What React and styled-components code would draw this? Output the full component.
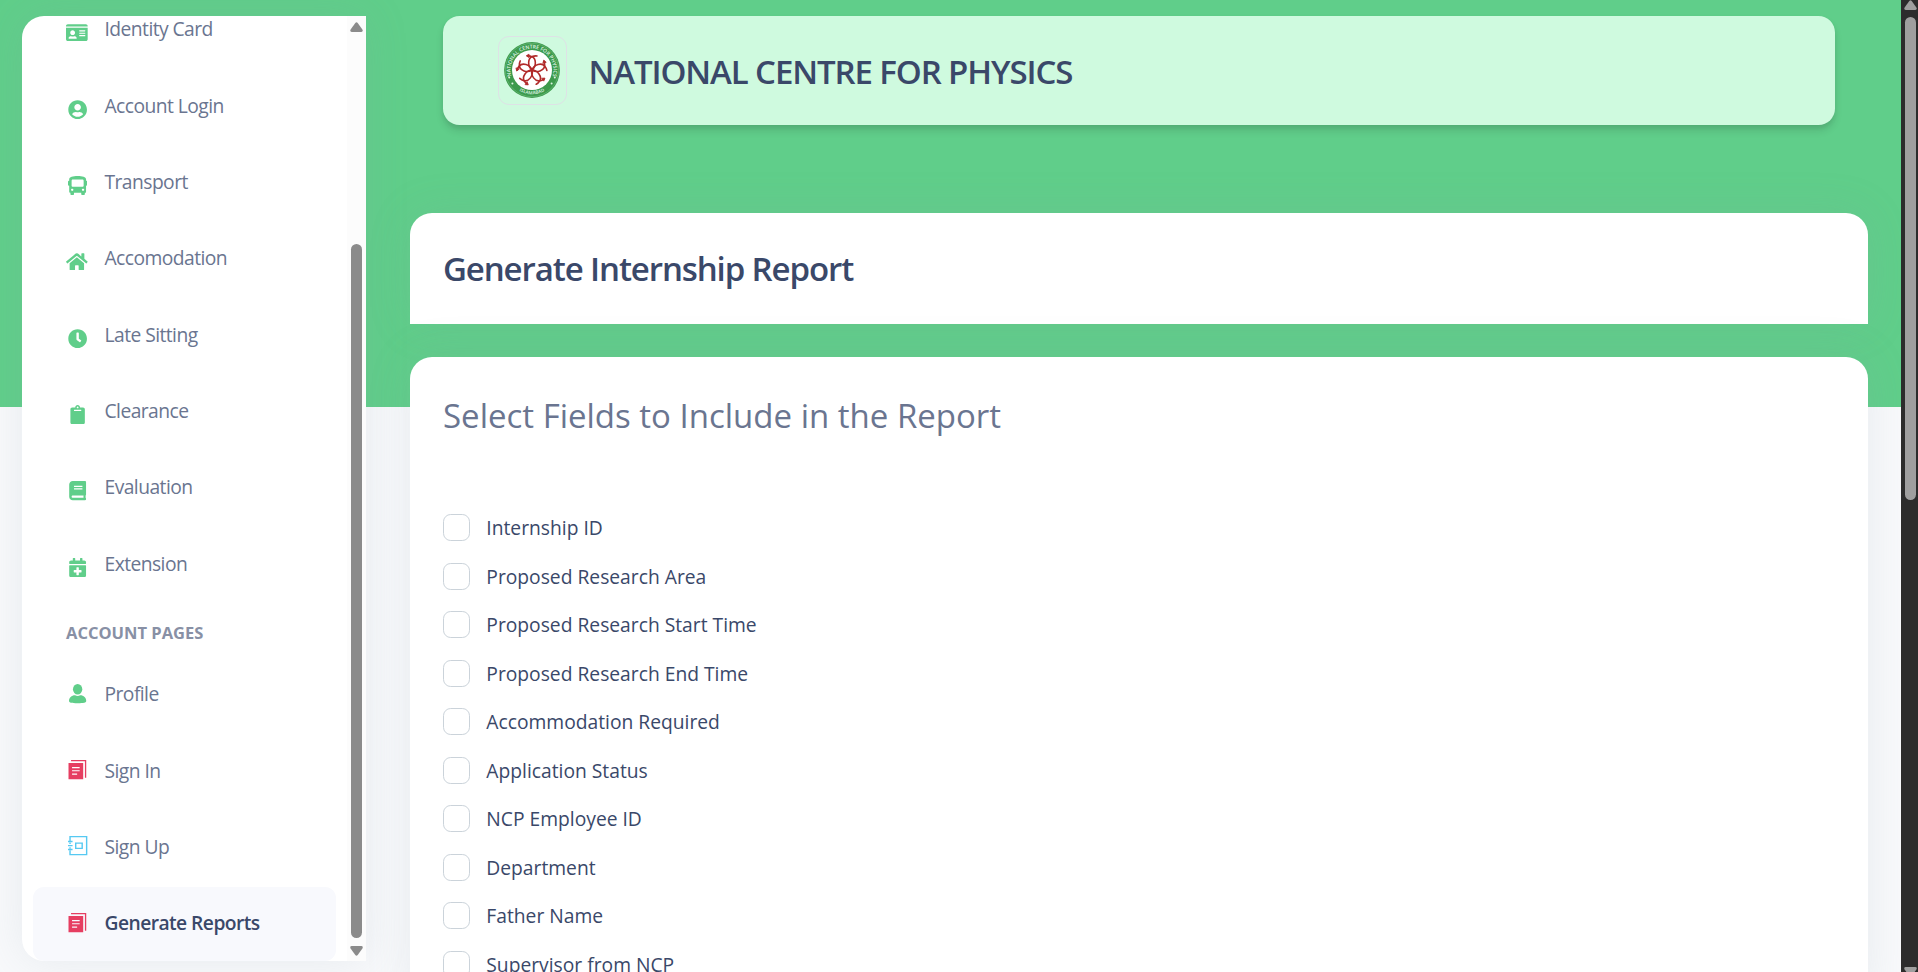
import React from "react";
import styled, { createGlobalStyle } from "styled-components";
import {
  FaIdCard,
  FaUserCircle,
  FaBus,
  FaHome,
  FaClock,
  FaClipboard,
  FaBook,
  FaCalendarPlus,
} from "react-icons/fa";

const GREEN = "#60ce8a";
const INK = "#3a4869";
const MUTED = "#6a7590";

const GlobalStyle = createGlobalStyle`
  *, *::before, *::after { box-sizing: border-box; }
  body {
    margin: 0;
    overflow: hidden;
    font-family: "Open Sans", "Noto Sans", sans-serif;
    color: ${INK};
  }
`;

const Page = styled.div`
  display: flex;
  height: 972px;
  overflow: hidden;
  background: linear-gradient(${GREEN} 407px, #f8f9fb 407px);
`;

const Sidebar = styled.aside`
  display: flex;
  flex: none;
  width: 344px;
  height: 945px;
  margin: 16px 0 0 22px;
  overflow: hidden;
  background: #fff;
  border-radius: 22px 0 0 22px;
  box-shadow: 0 0 44px rgba(136, 152, 170, 0.15);
`;

const NavList = styled.nav`
  display: flex;
  flex: 1;
  flex-direction: column;
  justify-content: flex-end;
  gap: 2.75px;
  min-height: 0;
  padding: 0 11px;
`;

const NavItem = styled.a`
  display: flex;
  flex: none;
  align-items: center;
  height: 73.6px;
  padding: 0 22px;
  border-radius: 11px;
  background: ${(p) => (p.$active ? "#f8f9fd" : "transparent")};
  color: ${(p) => (p.$active ? INK : MUTED)};
  font-size: 19.25px;
  font-weight: ${(p) => (p.$active ? 600 : 400)};
  letter-spacing: -0.55px;
  line-height: 29px;
`;

const NavIcon = styled.span`
  display: flex;
  align-items: center;
  justify-content: center;
  width: 44.5px;
  height: 30px;
  margin-right: 5px;
  padding-top: ${(p) => (p.$low ? "5.5px" : "0")};
  padding-bottom: ${(p) => (p.$low ? "0" : "4px")};
  color: ${(p) => p.$color};
  font-size: 19.25px;

  svg {
    flex: none;
    width: ${(p) => (p.$wide ? "21.7px" : "19.25px")};
    height: 19.25px;
  }
`;

const NavText = styled.span`
  padding-bottom: 3px;
`;

const NavHeading = styled.h6`
  flex: none;
  height: 51.5px;
  margin: 0;
  padding: 16.5px 0 0 33px;
  color: #8890a5;
  font-size: 16.5px;
  font-weight: 700;
  line-height: 24px;
  white-space: nowrap;
`;

const ScrollTrack = styled.div`
  display: flex;
  flex: none;
  flex-direction: column;
  align-items: center;
  width: ${(p) => p.$width};
  padding: ${(p) => p.$pad};
  background: ${(p) => p.$track};
  color: ${(p) => p.$thumb};

  svg { display: block; flex: none; }
`;

const ScrollThumb = styled.div`
  flex: none;
  width: 11px;
  height: ${(p) => p.$height};
  margin: ${(p) => p.$margin};
  border-radius: 5.5px;
  background: currentColor;
`;

const Main = styled.main`
  flex: 1;
  min-width: 0;
  padding: 16px 33px 0 44px;
`;

const Banner = styled.header`
  display: flex;
  align-items: center;
  height: 109px;
  margin: 0 33px;
  padding-left: 55px;
  border-radius: 16.5px;
  background: #cffadf;
  box-shadow: 0 5.5px 8px -1px rgba(20, 20, 20, 0.14),
    0 3px 5.5px -1px rgba(20, 20, 20, 0.08);
`;

const LogoFrame = styled.div`
  display: flex;
  align-items: center;
  justify-content: center;
  width: 69px;
  height: 69px;
  margin-right: 21.5px;
  padding: 0 1.5px 1px 0;
  border: 1px solid #dee2e6;
  border-radius: 11px;
`;

const Title = styled.h4`
  margin: 0;
  font-size: 33px;
  font-weight: 600;
  letter-spacing: -1.1px;
  line-height: 46px;
`;

const BannerTitle = styled(Title)`
  padding-top: 2px;
`;

const Card = styled.section`
  height: ${(p) => p.$height};
  margin-top: ${(p) => p.$gap};
  padding: 33px;
  border-radius: 22px 22px 0 0;
  background: #fff;
  box-shadow: 0 0 44px rgba(136, 152, 170, 0.15);
`;

const FieldsTitle = styled.p`
  margin: 0 0 61.2px;
  color: ${MUTED};
  font-size: 33px;
  line-height: 52px;
`;

const FieldRow = styled.label`
  display: flex;
  align-items: center;
  height: 48.55px;
  font-size: 19.25px;
  line-height: 27px;
`;

const CheckBox = styled.input`
  appearance: none;
  width: 27px;
  height: 27px;
  margin: 0 16.3px 0 0;
  border: 1px solid #cbd3da;
  border-radius: 7.7px;
  background: #fff;
`;

const SvgIcon = styled.svg`
  display: block;
  flex: none;
  overflow: visible;
`;

const PersonIcon = () => (
  <SvgIcon width="19" height="19" viewBox="0 0 19 19" fill="currentColor">
    <ellipse cx="9.5" cy="5.2" rx="4.6" ry="5.2" />
    <path d="M7 11.2c1.5 1 3.500 1 5 0 3.600 0 6 2.600 6 5.600 0 1.600-2.500 2.200-8.500 2.200S1 18.400 1 16.800c0-3 2.400-5.600 6-5.600z" />
  </SvgIcon>
);

const CopyIcon = () => (
  <SvgIcon width="19" height="19" viewBox="0 0 19 19" fill="currentColor">
    <path fillRule="evenodd" d="M.5 3h14.500v16H.5zM4 7v1.200h7.500V7zm0 3v1.200h7.500V10zm0 3.400v1.200h5v-1.200z" />
    <path d="M3 0h15v17.500h-1.300V1.300H3z" />
  </SvgIcon>
);

const CollectionIcon = () => (
  <SvgIcon width="19" height="19" viewBox="0 0 19 19" fill="none" stroke="currentColor" strokeWidth="1.4">
    <path d="M2 5V.6h16.400v17.800H2V14M2 6.500v1.500M2 11v1.500" />
    <path d="M0 5.500h4.500M0 9.500h4.500M0 13.400h4.500" />
    <path d="M7.600 7h6.400v5.200H7.600z" />
  </SvgIcon>
);

const ArrowUp = () => (
  <svg width="13" height="10" viewBox="0 0 13 10" fill="currentColor">
    <path d="M5.300.9Q6.500-.6 7.700.9L12.400 7.500Q13.500 9.700 11.300 9.900H1.700Q-.5 9.700.6 7.500z" />
  </svg>
);

const ArrowDown = () => (
  <svg width="13" height="10" viewBox="0 0 13 10" fill="currentColor">
    <path d="M5.300 9.100Q6.500 10.600 7.700 9.100L12.400 2.500Q13.500.3 11.300.1H1.700Q-.5.3.6 2.500z" />
  </svg>
);

const Logo = () => (
  <SvgIcon width="56" height="56" viewBox="0 0 56 56">
    <defs>
      <path id="ring-top" d="M7.800 35.400A21.500 21.500 0 1 1 48.200 35.400" />
      <path id="ring-bottom" d="M11 45.500A24.600 24.600 0 0 0 45 45.500" />
      <g id="petal" fill="none" stroke="#b12a2a" strokeWidth="1.600" strokeLinecap="round">
        <path d="M28 28C23.500 24.500 23.500 16.500 28.300 14.600 30 13.900 31.500 13.800 33 14" />
        <path d="M28 28C32.500 24.500 32.500 16.500 27.700 14.600 26.500 14 25 13.800 23.500 13.900" />
        <path d="M24.700 12.300L22.300 13.800 24.700 15.400z" fill="#b12a2a" strokeWidth=".8" />
      </g>
    </defs>
    <circle cx="28" cy="28" r="27.900" fill="#3c9a4c" />
    <circle cx="28" cy="28" r="26.700" fill="none" stroke="#7cc489" strokeWidth=".5" />
    <circle cx="28" cy="28" r="20" fill="#fff" />
    {[0, 72, 144, 216, 288].map((a) => (
      <use key={a} href="#petal" transform={`rotate(${a} 28 28)`} />
    ))}
    <g fill="#dff3e3" fontFamily="Open Sans" fontWeight="600" fontSize="5.200">
      <text textAnchor="middle">
        <textPath href="#ring-top" startOffset="50%" textLength="80">NATIONAL CENTRE FOR PHYSICS</textPath>
      </text>
      <text textAnchor="middle" fontSize="4.600">
        <textPath href="#ring-bottom" startOffset="50%">ISLAMABAD</textPath>
      </text>
      <circle cx="5.200" cy="35.500" r="1" />
      <circle cx="8.400" cy="41.500" r="1" />
      <circle cx="50.800" cy="35.500" r="1" />
      <circle cx="47.600" cy="41.500" r="1" />
    </g>
  </SvgIcon>
);

const MODULES = [
  ["Identity Card", FaIdCard, true],
  ["Account Login", FaUserCircle],
  ["Transport", FaBus],
  ["Accomodation", FaHome, true],
  ["Late Sitting", FaClock],
  ["Clearance", FaClipboard],
  ["Evaluation", FaBook],
  ["Extension", FaCalendarPlus],
];

const ACCOUNT_PAGES = [
  ["Profile", PersonIcon, GREEN],
  ["Sign In", CopyIcon, "#e63e61"],
  ["Sign Up", CollectionIcon, "#56c9f2"],
  ["Generate Reports", CopyIcon, "#e63e61"],
];

const FIELDS = [
  "Internship ID",
  "Proposed Research Area",
  "Proposed Research Start Time",
  "Proposed Research End Time",
  "Accommodation Required",
  "Application Status",
  "NCP Employee ID",
  "Department",
  "Father Name",
  "Supervisor from NCP",
];

export default function App() {
  return (
    <>
      <GlobalStyle />
      <Page>
        <Sidebar>
          <NavList>
            {MODULES.map(([label, Icon, wide]) => (
              <NavItem key={label}>
                <NavIcon $color={GREEN} $wide={wide} $low>
                  <Icon />
                </NavIcon>
                <NavText>{label}</NavText>
              </NavItem>
            ))}
            <NavHeading>ACCOUNT PAGES</NavHeading>
            {ACCOUNT_PAGES.map(([label, Icon, color]) => (
              <NavItem key={label} $active={label === "Generate Reports"}>
                <NavIcon $color={color}>
                  <Icon />
                </NavIcon>
                <NavText>{label}</NavText>
              </NavItem>
            ))}
          </NavList>
          <ScrollTrack $width="19px" $pad="6px 0 0" $track="#fcfcfc" $thumb="#8b8b8b">
            <ArrowUp />
            <ScrollThumb $height="694px" $margin="212px 0 8px" />
            <ArrowDown />
          </ScrollTrack>
        </Sidebar>

        <Main>
          <Banner>
            <LogoFrame>
              <Logo />
            </LogoFrame>
            <BannerTitle>NATIONAL CENTRE FOR PHYSICS</BannerTitle>
          </Banner>
          <Card $height="111px" $gap="88px">
            <Title>Generate Internship Report</Title>
          </Card>
          <Card $height="640px" $gap="33px">
            <FieldsTitle>Select Fields to Include in the Report</FieldsTitle>
            {FIELDS.map((field) => (
              <FieldRow key={field}>
                <CheckBox type="checkbox" />
                {field}
              </FieldRow>
            ))}
          </Card>
        </Main>

        <ScrollTrack $width="17px" $pad="0 0 0 2px" $track="#2c2c2c" $thumb="#9f9f9f">
          <ArrowUp />
          <ScrollThumb $height="483px" $margin="7px 0 467px" />
          <ArrowDown />
        </ScrollTrack>
      </Page>
    </>
  );
}
